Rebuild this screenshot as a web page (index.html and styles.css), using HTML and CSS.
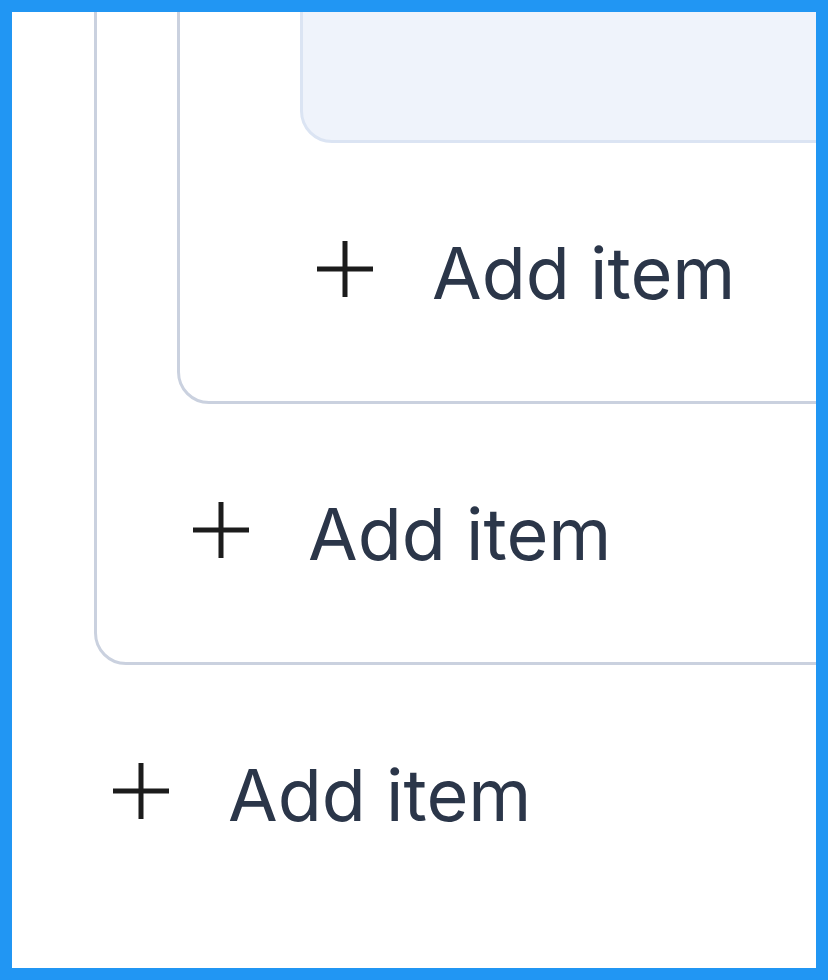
FILE: index.html
```html
<!DOCTYPE html>
<html lang="en">
<head>
    <meta charset="UTF-8">
    <meta name="viewport" content="width=device-width, initial-scale=1.0">
    <title>Nested list</title>
    <link rel="stylesheet" href="styles.css">
</head>
<body>
    <div class="frame">
        <div class="tree">
            <!-- Nivel 1 -->
            <div class="node node-outer">
                <!-- Nivel 2 -->
                <div class="node node-middle">
                    <!-- Nivel 3 -->
                    <div class="node-inner"></div>
                    <button type="button" class="add add-l1">
                        <svg class="plus" viewBox="0 0 58 58"><path d="M29 1v56M1 29h56"/></svg>
                        <span>Add item</span>
                    </button>
                </div>
                <button type="button" class="add add-l2">
                    <svg class="plus" viewBox="0 0 58 58"><path d="M29 1v56M1 29h56"/></svg>
                    <span>Add item</span>
                </button>
            </div>
            <button type="button" class="add add-l3">
                <svg class="plus" viewBox="0 0 58 58"><path d="M29 1v56M1 29h56"/></svg>
                <span>Add item</span>
            </button>
        </div>
    </div>
</body>
</html>
```
FILE: styles.css
```css
body {
    margin: 0;
    background-color: #fff;
}
.frame {
    width: 828px;
    height: 980px;
    box-sizing: border-box;
    border: 12px solid #2196f3;
    background-color: #fff;
    overflow: hidden;
}
.tree {
    margin: -200px -200px 0 82px;
}
.node {
    border: 3px solid #cad1df;
    border-radius: 32px;
}
.node-middle {
    margin-left: 80px;
}
.node-inner {
    margin-left: 120px;
    height: 319px;
    background-color: #eff3fb;
    border: 3px solid #dbe4f3;
    border-radius: 32px;
}
.add {
    display: flex;
    align-items: center;
    gap: 58px;
    height: 258px;
    width: 100%;
    margin: 0;
    border: none;
    background: none;
    cursor: pointer;
    font-family: Inter, "Noto Sans", sans-serif;
    font-size: 72px;
    color: #2b3649;
    text-align: left;
}
.add-l1 {
    padding: 0 0 0 136px;
}
.add-l2 {
    padding: 0 0 0 95px;
}
.add-l3 {
    padding: 0 0 0 18px;
}
.plus {
    flex: none;
    width: 58px;
    height: 58px;
    margin-bottom: 7px;
    fill: none;
    stroke: #1c1c1c;
    stroke-width: 5;
}
```
